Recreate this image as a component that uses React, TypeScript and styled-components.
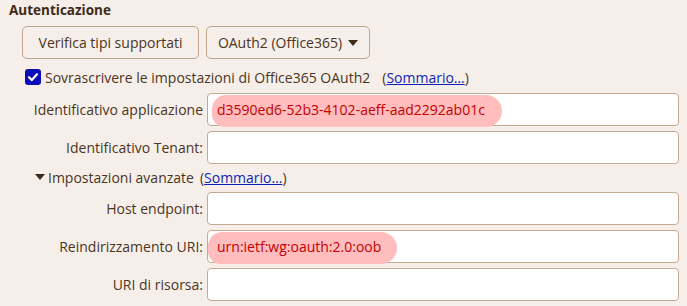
import React from "react";
import styled, { createGlobalStyle } from "styled-components";

const Global = createGlobalStyle`
  html, body {
    margin: 0;
    padding: 0;
    background: #f6efe9;
  }
  body {
    font-family: "Open Sans", "Noto Sans", sans-serif;
    font-size: 14px;
    color: #4a3524;
  }
`;

const Page = styled.div`
  width: 687px;
  height: 306px;
  overflow: hidden;
  box-sizing: border-box;
  padding-right: 8px;
`;

const Heading = styled.div`
  padding-left: 9px;
  height: 20px;
  line-height: 20px;
  font-size: 13.5px;
  font-weight: 700;
  color: #3e2a18;
`;

const ButtonRow = styled.div`
  display: flex;
  gap: 7px;
  margin-top: 6px;
  padding-left: 22px;
`;

const Button = styled.div<{ $w: number }>`
  box-sizing: border-box;
  width: ${(p) => p.$w}px;
  height: 33px;
  display: flex;
  align-items: center;
  justify-content: center;
  gap: 6px;
  border: 1px solid #bea58c;
  border-radius: 5px;
  background: #f6efe9;
`;

const Caret = styled.span`
  width: 0;
  height: 0;
  border-left: 5px solid transparent;
  border-right: 5px solid transparent;
  border-top: 6px solid #3e2a18;
`;

const CheckRow = styled.div`
  display: flex;
  align-items: center;
  height: 20px;
  margin-top: 8px;
  padding-left: 25px;
`;

const Check = styled.span`
  box-sizing: border-box;
  width: 16px;
  height: 16px;
  border-radius: 3px;
  background: #0c0cb8;
  display: flex;
  align-items: center;
  justify-content: center;
  margin-right: 4px;
`;

const Link = styled.span`
  color: #0f1fb8;
  text-decoration: underline;
`;

const Paren = styled.span<{ $gap: number }>`
  margin-left: ${(p) => p.$gap}px;
`;

const Form = styled.div<{ $top: number }>`
  display: grid;
  grid-template-columns: 203px 1fr;
  column-gap: 4px;
  row-gap: 5px;
  margin-top: ${(p) => p.$top}px;
`;

const Label = styled.div`
  height: 33px;
  display: flex;
  align-items: center;
  justify-content: flex-end;
  white-space: nowrap;
`;

const Field = styled.div`
  box-sizing: border-box;
  height: 33px;
  border: 1px solid #c4aa90;
  border-radius: 4px;
  background: #ffffff;
  display: flex;
  align-items: center;
  padding-left: 3px;
  overflow: visible;
`;

const Marker = styled.span<{ $shift: number; $padL: number; $padR: number }>`
  display: flex;
  align-items: center;
  height: 30px;
  margin-left: ${(p) => p.$shift}px;
  margin-top: 2px;
  padding: 0 ${(p) => p.$padR}px 2px ${(p) => p.$padL}px;
  border-radius: 16px 18px 18px 14px;
  background: #ffbdbd;
  color: #c40000;
  white-space: nowrap;
`;

const Expander = styled.div`
  display: flex;
  align-items: center;
  height: 20px;
  margin-top: 3px;
  padding-left: 35px;
`;

const Triangle = styled.span`
  width: 0;
  height: 0;
  border-left: 5.5px solid transparent;
  border-right: 5.5px solid transparent;
  border-top: 6px solid #3e2a18;
  margin-right: 3px;
`;

const App = () => {
  return (
    <Page>
      <Global />
      <Heading>Autenticazione</Heading>
      <ButtonRow>
        <Button $w={177}>Verifica tipi supportati</Button>
        <Button $w={164}>
          OAuth2 (Office365)
          <Caret />
        </Button>
      </ButtonRow>
      <CheckRow>
        <Check>
          <svg width="12" height="12" viewBox="0 0 12 12">
            <path
              d="M2 6.2 L4.8 9 L10 3.3"
              fill="none"
              stroke="#ffffff"
              strokeWidth="2.2"
              strokeLinecap="round"
              strokeLinejoin="round"
            />
          </svg>
        </Check>
        Sovrascrivere le impostazioni di Office365 OAuth2
        <Paren $gap={12}>
          (<Link>Sommario…</Link>)
        </Paren>
      </CheckRow>
      <Form $top={6}>
        <Label>Identificativo applicazione</Label>
        <Field>
          <Marker $shift={1} $padL={5} $padR={17}>
            d3590ed6-52b3-4102-aeff-aad2292ab01c
          </Marker>
        </Field>
        <Label>Identificativo Tenant:</Label>
        <Field />
      </Form>
      <Expander>
        <Triangle />
        Impostazioni avanzate
        <Paren $gap={6}>
          (<Link>Sommario…</Link>)
        </Paren>
      </Expander>
      <Form $top={5}>
        <Label>Host endpoint:</Label>
        <Field />
        <Label>Reindirizzamento URI:</Label>
        <Field>
          <Marker $shift={-3} $padL={9} $padR={16}>
            urn:ietf:wg:oauth:2.0:oob
          </Marker>
        </Field>
        <Label>URI di risorsa:</Label>
        <Field />
      </Form>
    </Page>
  );
};

export default App;
